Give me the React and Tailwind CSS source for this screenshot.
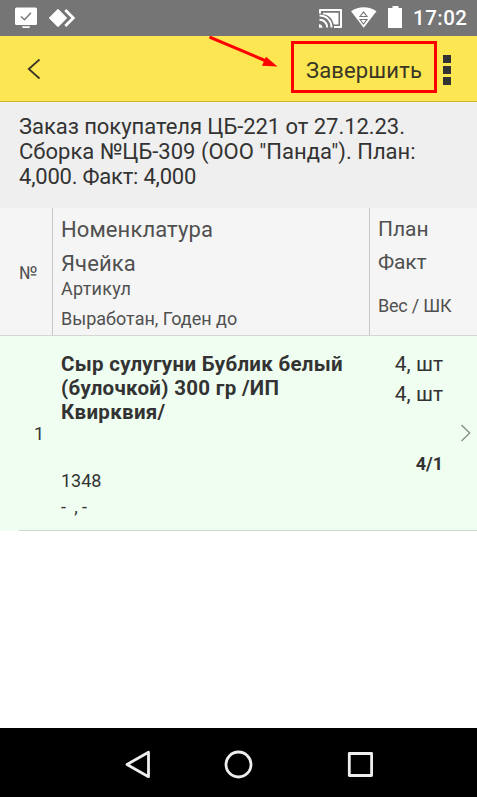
const items = [
  {
    number: 1,
    name: ["Сыр сулугуни Бублик белый", "(булочкой) 300 гр /ИП", "Квирквия/"],
    article: "1348",
    dates: "-  , -",
    plan: "4, шт",
    fact: "4, шт",
    weight: "4/1",
  },
];

function StatusBar() {
  return (
    <div className="flex h-9 shrink-0 items-center justify-between bg-[#757575] text-white">
      <svg width="90" height="36" fill="none">
        <rect x="15" y="7.5" width="22" height="17.5" rx="1.5" fill="currentColor" />
        <path d="M22 26.2h8v.8l-1 1h-6l-1-1z" fill="currentColor" />
        <path d="M21 16.5l3.5 3.2 6.5-7" stroke="#757575" strokeWidth="1.4" />
        <path d="M58 9.3l8.7 8.7-8.7 8.7-8.7-8.7z" fill="currentColor" stroke="currentColor" strokeLinejoin="round" />
        <path d="M65.3 10l8 8-8 8" stroke="currentColor" strokeWidth="2.8" />
      </svg>
      <div className="flex items-center">
        <svg width="92" height="36" fill="none">
          <path d="M4 13.5V10h21v17h-7" stroke="currentColor" strokeWidth="2" strokeLinejoin="round" />
          <path d="M7 12.7h15.5v11.8h-4.7C16.3 18.5 13 14.7 7 14.2z" fill="currentColor" />
          <path d="M3.5 15.5c7 0 12 5 12 12M3.5 19.8c4.5 0 7.7 3.2 7.7 7.7" stroke="currentColor" strokeWidth="2" />
          <path d="M3 24.2c2 0 3.6 1.5 3.6 3.6H3z" fill="currentColor" />
          <path d="M35 11.3c7.5-5.4 18-5.4 25.5 0L47.7 27.8z" fill="currentColor" />
          <path d="M44 16.5l3.5-4.5 3.5 4.5zM44 19.5l3.5 4.5 3.5-4.5z" stroke="#757575" strokeWidth="1.1" />
          <path d="M76.5 6h6v2H86v20H72V8h4.5z" fill="currentColor" />
        </svg>
        <span className="mr-[9.5px] ml-[5px] text-[20.5px] leading-9 font-medium tracking-[0.5px]">17:02</span>
      </div>
    </div>
  );
}

function AppBar() {
  return (
    <div className="relative flex h-[66px] shrink-0 items-center justify-between border-b border-[#cdb72f] bg-[#fce652] text-[#393627]">
      <svg width="60" height="65" fill="none">
        <path d="M39.5 23.5L28.8 33l10.7 9.5" stroke="currentColor" strokeWidth="1.8" />
      </svg>
      <svg className="absolute top-0 left-[200px]" width="85" height="40">
        <path d="M9.5 1L65 24.5" stroke="#ff0000" strokeWidth="3" />
        <path d="M77.5 30.5L66 20.8l-4 9z" fill="#ff0000" />
      </svg>
      <div className="flex items-center">
        <button className="mt-[-4px] h-[52px] w-[146px] border-3 border-[#ff0000] pt-[8px] text-center text-[22px] tracking-[0.15px] whitespace-nowrap">
          Завершить
        </button>
        <div className="mr-[26px] ml-1.5 grid gap-[3px] pt-0.5">
          <span className="size-2 bg-[#333]" />
          <span className="size-2 bg-[#333]" />
          <span className="size-2 bg-[#333]" />
        </div>
      </div>
    </div>
  );
}

function Summary() {
  return (
    <div className="h-[106px] bg-[#efefef] pt-3 pl-[19px] text-[22px] leading-[25px] whitespace-nowrap text-[#333]">
      <p className="tracking-[-0.05px]">Заказ покупателя ЦБ-221 от 27.12.23.</p>
      <p>Сборка №ЦБ-309 (ООО "Панда"). План:</p>
      <p className="tracking-[-0.22px]">4,000. Факт: 4,000</p>
    </div>
  );
}

function TableHeader() {
  return (
    <div className="flex h-32 border-b border-[#d3d6d3] bg-[#f5f5f5] whitespace-nowrap text-[#505050]">
      <div className="flex w-[53px] items-center border-r border-[#c8c8c8] pl-[19px] text-[18px]">
        <span className="pt-0.5">№</span>
      </div>
      <div className="w-[317px] border-r border-[#c8c8c8] pt-[5px] pl-2">
        <div className="text-[22px] leading-[34px] tracking-[0.1px]">Номенклатура</div>
        <div className="text-[22px] leading-[34px] tracking-[0.1px]">Ячейка</div>
        <div className="text-[18px] leading-[15px] tracking-[0.25px]">Артикул</div>
        <div className="mt-2 text-[18px] leading-[30px]">Выработан, Годен до</div>
      </div>
      <div className="pt-[5px] pl-2">
        <div className="text-[21px] leading-[33px]">План</div>
        <div className="text-[21px] leading-[33px] tracking-[-0.2px]">Факт</div>
        <div className="mt-3 text-[18px] leading-[30px] tracking-[-0.2px]">Вес / ШК</div>
      </div>
    </div>
  );
}

function ItemRow({ item }) {
  return (
    <div className="bg-[#effef1] text-[#333]">
      <div className="flex h-[194px] whitespace-nowrap">
        <div className="flex w-[61px] items-center pl-[34px] text-[18px]">{item.number}</div>
        <div className="w-[309px] pt-4">
          {item.name.map((line) => (
            <div key={line} className="text-[20.5px] leading-6 font-bold tracking-[0.3px]">
              {line}
            </div>
          ))}
          <div className="mt-11 text-[18px] leading-[26px]">{item.article}</div>
          <div className="text-[18px] leading-[26px] tracking-[-0.2px] whitespace-pre">{item.dates}</div>
        </div>
        <div className="w-[73px] pt-[13px] text-right">
          <div className="text-[21px] leading-[30px]">{item.plan}</div>
          <div className="text-[21px] leading-[30px]">{item.fact}</div>
          <div className="mt-10 text-[18px] leading-[30px] font-bold">{item.weight}</div>
        </div>
        <svg width="34" height="194" fill="none">
          <path d="M18.5 89l8.2 8-8.2 8" stroke="#868c87" strokeWidth="1.3" />
        </svg>
      </div>
      <div className="ml-[19px] h-px bg-[#cfd6d0]" />
    </div>
  );
}

function NavBar() {
  return (
    <div className="flex h-[69px] shrink-0 justify-center bg-black">
      <svg width="477" height="69" fill="none" stroke="#eee" strokeWidth="2.8" strokeLinejoin="round">
        <path d="M148.5 24.2v24.5L127 36.5z" />
        <circle cx="238.5" cy="36.5" r="12.5" />
        <rect x="349.3" y="25.5" width="22.3" height="22" />
      </svg>
    </div>
  );
}

export default function App() {
  return (
    <div className="flex h-[797px] w-[477px] flex-col overflow-hidden bg-white font-['Roboto',sans-serif]">
      <StatusBar />
      <AppBar />
      <main className="flex-1">
        <Summary />
        <TableHeader />
        {items.map((item) => (
          <ItemRow key={item.number} item={item} />
        ))}
      </main>
      <NavBar />
    </div>
  );
}
